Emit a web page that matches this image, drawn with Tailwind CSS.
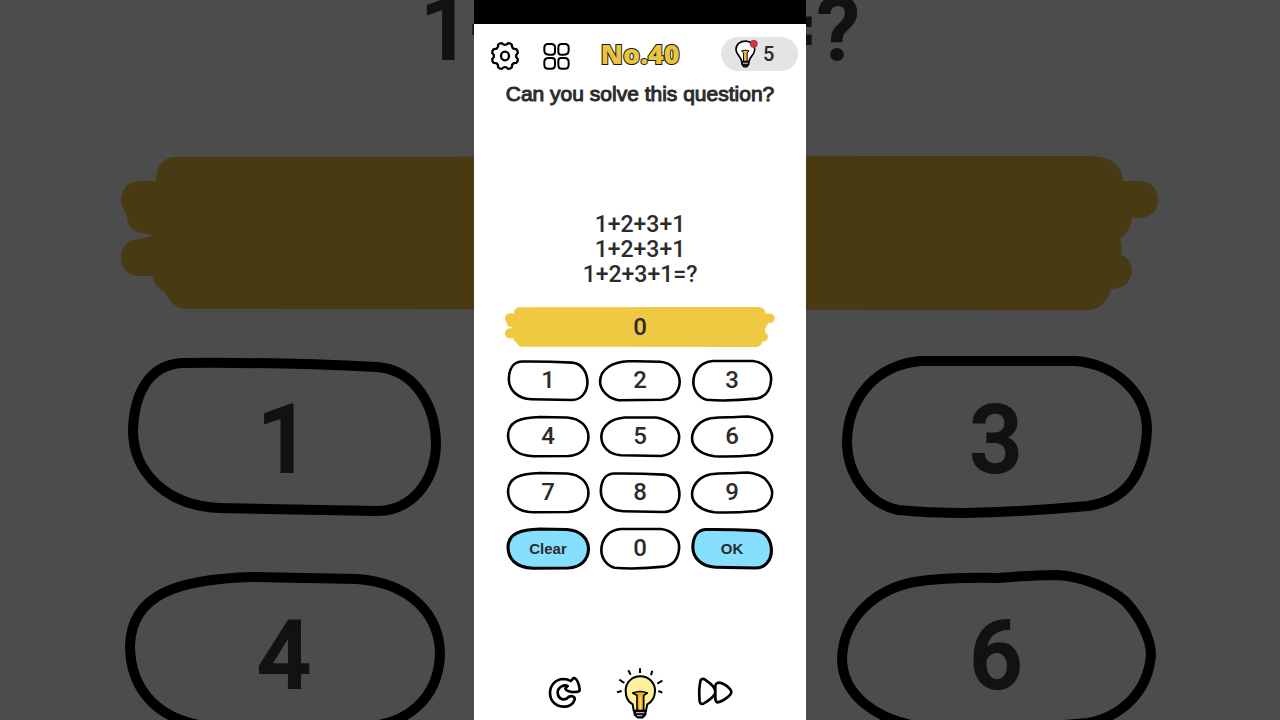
<!doctype html>
<html lang="en">
    <head>
        <meta charset="utf-8" />
        <meta name="viewport" content="width=device-width, initial-scale=1" />
        <script src="https://cdn.jsdelivr.net/npm/@tailwindcss/browser@4"></script>
        <title>No.40</title>
    </head>

    <body
        class="relative min-h-screen overflow-x-hidden bg-[#4c4c4c] font-['Roboto',Arial,sans-serif] font-medium text-[#2b2b2b]"
    >
        <!-- shared hand-drawn shapes -->
        <svg class="hidden" aria-hidden="true">
            <symbol id="key-a" viewBox="0 0 316 158" overflow="visible">
                <path d="M56 6Q150 5 251 10C290 13 310 50 310 88C309 125 285 154 251 154L94 151C40 149 7 115 7 73C8 38 22 8 56 6Z" />
            </symbol>
            <symbol id="key-b" viewBox="0 0 316 158" overflow="visible">
                <path d="M113 5Q175 4 235 7C280 10 311 45 311 85C310 125 282 151 242 153L75 155C35 150 4 115 4 82C6 35 50 8 113 5Z" />
            </symbol>
            <symbol id="key-c" viewBox="0 0 316 158" overflow="visible">
                <path d="M83 4L238 4C280 8 309 38 309 73C307 115 290 143 250 149Q185 155 126 156Q90 156 60 153C28 146 9 115 9 85C10 40 38 8 83 4Z" />
            </symbol>
            <symbol id="key-d" viewBox="0 0 316 158" overflow="visible">
                <path d="M127 4L231 6C285 10 314 42 314 82C312 125 282 152 236 154L100 155C30 153 4 115 4 72C6 22 50 6 127 4Z" />
            </symbol>
            <symbol id="key-e" viewBox="0 0 316 158" overflow="visible">
                <path d="M100 6L220 6C270 14 309 45 309 80C308 120 285 148 240 154L85 151C35 148 9 115 9 80C10 38 45 10 100 6Z" />
            </symbol>
            <symbol id="key-f" viewBox="0 0 316 158" overflow="visible">
                <path d="M76 9Q110 4 160 5Q195 2 218 2C245 3 274 16 288 29C300 42 313 64 313 82C310 118 285 143 250 150Q160 158 90 155C35 148 4 120 4 85C6 42 40 16 76 9Z" />
            </symbol>
            <symbol id="brush" viewBox="0 0 1038 154" preserveAspectRatio="none">
                <path d="M52 1L780 0L968 0C990 0 1002 10 1002 25L1020 25C1043 27 1043 60 1020 62L1011 62Q1010 75 999 83Q1001 90 1000 98C1018 108 1013 133 990 133Q984 154 966 154L63 153Q49 150 45 137Q34 132 31 120L16 120C-5 117 -6 87 16 83Q27 82 31 79L20 77Q6 74 6 60Q0 50 0 42Q3 26 17 25L35 25Q35 4 52 1Z" />
            </symbol>
        </svg>

        <!-- dimmed backdrop behind the phone -->
        <div
            class="absolute inset-0 flex flex-col items-center overflow-hidden text-[#121212]"
            aria-hidden="true"
        >
            <div class="-mt-[19px] h-24 shrink-0 text-[88px] leading-[96px] [-webkit-text-stroke:2px]">1+2+3+1=?</div>
            <svg class="mt-[79px] h-[154px] w-[1038px] shrink-0 fill-[#483b14]"><use href="#brush" /></svg>
            <div
                class="mt-[47px] grid shrink-0 grid-cols-[316px_316px] gap-x-[396px] gap-y-[58px] text-[94px] leading-[150px] [-webkit-text-stroke:2px] *:grid *:place-items-center *:*:col-start-1 *:*:row-start-1"
            >
                <div><svg class="h-[158px] w-[316px] overflow-visible fill-none stroke-black stroke-10"><use href="#key-a" /></svg><span class="pt-2">1</span></div>
                <div><svg class="h-[158px] w-[316px] overflow-visible fill-none stroke-black stroke-10"><use href="#key-c" /></svg><span class="pt-2">3</span></div>
                <div><svg class="h-[158px] w-[316px] overflow-visible fill-none stroke-black stroke-10"><use href="#key-d" /></svg><span class="pt-2">4</span></div>
                <div><svg class="h-[158px] w-[316px] overflow-visible fill-none stroke-black stroke-10"><use href="#key-f" /></svg><span class="pt-2">6</span></div>
            </div>
        </div>

        <main class="relative mx-auto flex min-h-screen w-full max-w-[332px] flex-col bg-white">
            <div class="h-6 bg-black"></div>

            <header class="mt-[13px] grid grid-cols-[1fr_auto_1fr] items-center px-2">
                <div class="flex items-center gap-[22px] pt-[3px] pl-2">
                    <button aria-label="Settings">
                        <svg class="size-[30px] fill-none stroke-black stroke-7" viewBox="-45 -45 90 90" stroke-linejoin="round">
                            <path
                                d="M38.4 9.2Q38.8 16.1 33.7 20.6Q19.8 19.8 20.6 33.7Q16.1 38.8 9.2 38.4Q0 28 -9.2 38.4Q-16.1 38.8 -20.6 33.7Q-19.8 19.8 -33.7 20.6Q-38.8 16.1 -38.4 9.2Q-28 0 -38.4 -9.2Q-38.8 -16.1 -33.7 -20.6Q-19.8 -19.8 -20.6 -33.7Q-16.1 -38.8 -9.2 -38.4Q0 -28 9.2 -38.4Q16.1 -38.8 20.6 -33.7Q19.8 -19.8 33.7 -20.6Q38.8 -16.1 38.4 -9.2Q28 0 38.4 9.2Z"
                            />
                            <ellipse rx="12" ry="13" />
                        </svg>
                    </button>
                    <button aria-label="Levels">
                        <svg class="size-7 fill-none stroke-black stroke-6" viewBox="186 33 84 84">
                            <path d="M204 39H214Q225 39 225 50V62Q225 71 216 71H206Q193 71 193 58V51Q193 39 204 39Z" />
                            <path d="M245 39H255Q266 39 266 50V58Q266 71 253 71H243Q235 71 235 62V50Q235 39 245 39Z" />
                            <path d="M206 81H216Q225 81 225 90V101Q225 113 214 113H204Q193 113 193 101V93Q193 81 206 81Z" />
                            <path d="M243 81H253Q266 81 266 93V101Q266 113 255 113H245Q235 113 235 101V90Q235 81 243 81Z" />
                        </svg>
                    </button>
                </div>
                <h1
                    class="font-['Open_Sans','Liberation_Sans',sans-serif] text-[27px] leading-[34px] font-extrabold text-[#e9c43c] [-webkit-text-stroke:2px_#1a1a1a] [paint-order:stroke_fill]"
                >No.40</h1>
                <button
                    class="flex h-[34px] w-[77px] items-center gap-1 justify-self-end rounded-full bg-[#e4e4e4] pl-[13px] text-xl"
                    aria-label="5 hints"
                >
                    <svg class="h-[30px] w-[25px] shrink-0" viewBox="432 30 76 90" fill="none" stroke="#000" stroke-width="5" stroke-linejoin="round">
                        <path d="M455 98C455 83 438 79 438 61C438 45 451 36 467 36C484 36 495 47 495 62C494 80 478 83 478 98Z" fill="#fff" />
                        <path d="M455 66Q467 60 478 66L472 71V97H461V71Z" fill="#e9b93a" stroke-width="3" />
                        <path d="M455 99H478L477 107L471 114H462L456 107Z" fill="#111" stroke-width="4" />
                        <path d="M459 103H474" stroke="#ddd" stroke-width="3" />
                        <circle cx="492" cy="44" r="11" fill="#d8353a" stroke="#7c2325" stroke-width="2" />
                    </svg>
                    <span>5</span>
                </button>
            </header>

            <h2 class="mt-[9px] text-center font-['Liberation_Sans',Arial,sans-serif] text-[21px] leading-7 font-normal [-webkit-text-stroke:1px]">Can you solve this question?</h2>

            <p class="mt-[104px] text-center text-[23px] leading-[25px]">
                1+2+3+1<br />1+2+3+1<br />1+2+3+1=?
            </p>

            <div class="mx-auto mt-5 grid h-10 w-[270px] place-items-center *:col-start-1 *:row-start-1">
                <svg class="h-10 w-[270px] fill-[#efc942]" aria-hidden="true"><use href="#brush" /></svg>
                <output id="answer" class="text-2xl" aria-label="Answer">0</output>
            </div>

            <div
                id="keypad"
                class="mx-auto mt-[13px] grid grid-cols-[82px_82px_82px] gap-x-[10px] gap-y-[15px] text-2xl leading-[41px] *:grid *:h-[41px] *:place-items-center *:*:col-start-1 *:*:row-start-1"
            >
                <button><svg class="h-[41px] w-[82px] overflow-visible fill-white stroke-black stroke-10"><use href="#key-a" /></svg><span>1</span></button>
                <button><svg class="h-[41px] w-[82px] overflow-visible fill-white stroke-black stroke-10"><use href="#key-b" /></svg><span>2</span></button>
                <button><svg class="h-[41px] w-[82px] overflow-visible fill-white stroke-black stroke-10"><use href="#key-c" /></svg><span>3</span></button>
                <button><svg class="h-[41px] w-[82px] overflow-visible fill-white stroke-black stroke-10"><use href="#key-d" /></svg><span>4</span></button>
                <button><svg class="h-[41px] w-[82px] overflow-visible fill-white stroke-black stroke-10"><use href="#key-e" /></svg><span>5</span></button>
                <button><svg class="h-[41px] w-[82px] overflow-visible fill-white stroke-black stroke-10"><use href="#key-f" /></svg><span>6</span></button>
                <button><svg class="h-[41px] w-[82px] overflow-visible fill-white stroke-black stroke-10"><use href="#key-d" /></svg><span>7</span></button>
                <button><svg class="h-[41px] w-[82px] overflow-visible fill-white stroke-black stroke-10"><use href="#key-a" /></svg><span>8</span></button>
                <button><svg class="h-[41px] w-[82px] overflow-visible fill-white stroke-black stroke-10"><use href="#key-f" /></svg><span>9</span></button>
                <button><svg class="h-[41px] w-[82px] overflow-visible fill-[#87dfff] stroke-black stroke-12"><use href="#key-d" /></svg><span class="font-['Liberation_Sans',Arial,sans-serif] text-[15px] font-bold">Clear</span></button>
                <button><svg class="h-[41px] w-[82px] overflow-visible fill-white stroke-black stroke-10"><use href="#key-c" /></svg><span>0</span></button>
                <button><svg class="h-[41px] w-[82px] overflow-visible fill-[#87dfff] stroke-black stroke-12"><use href="#key-a" /></svg><span class="font-['Liberation_Sans',Arial,sans-serif] text-[15px] font-bold">OK</span></button>
            </div>

            <footer class="mt-auto flex items-center justify-center gap-8">
                <button class="pb-1" aria-label="Restart">
                    <svg class="size-9 fill-white stroke-black stroke-8" viewBox="51 57 108 108" stroke-linejoin="round">
                        <path
                            d="M122 78L131 69C140 68 149 90 149 106C148 110 140 111 132 111C122 112 108 108 106 101C106 97 112 96 113 93C103 88 82 96 83 114C85 135 105 138 116 126C124 121 136 124 134 134C130 148 115 156 100 155C75 154 60 136 60 113C61 88 78 73 100 72C108 72 116 74 122 78Z"
                        />
                    </svg>
                </button>
                <button aria-label="Hint">
                    <svg class="h-[52px] w-[50px]" viewBox="255 39 150 156" fill="none" stroke="#000" stroke-width="6" stroke-linejoin="round">
                        <path d="M311 167L308 148C294 140 287 124 287 107C287 82 306 64 331 64C356 64 375 83 375 107C375 125 366 140 352 148L348 167Z" fill="#fff09b" />
                        <path d="M308 114Q330 105 352 114L341 121V166H321V121Z" fill="#f3b31f" stroke-width="5" />
                        <path d="M331 124V164" stroke="#ffdb63" stroke-width="4" />
                        <path d="M312 168H348L346 180L338 188H323L314 180Z" fill="#111" stroke-width="5" />
                        <path d="M318 173H343M321 182H337" stroke="#d5d5d5" stroke-width="3" />
                        <path d="M330 40V54M295 46L302 59M367 47L363 61M268 74L283 84M397 77L382 86M261 112L275 108M397 113L385 108" stroke-width="6" />
                    </svg>
                </button>
                <button class="pb-1" aria-label="Skip">
                    <svg class="size-9 fill-white stroke-black stroke-8" viewBox="501 57 108 108" stroke-linejoin="round">
                        <path d="M512 75C516 70 522 71 528 76C540 84 556 98 556 110C556 122 535 138 520 146C512 149 510 145 509 138C507 118 507 95 512 75Z" />
                        <path d="M562 84C575 78 604 100 604 112C604 122 575 141 563 142C556 141 556 133 556 128V92C557 88 558 85 562 84Z" />
                    </svg>
                </button>
            </footer>
        </main>

        <script>
            const answer = document.getElementById("answer");

            document.getElementById("keypad").addEventListener("click", (e) => {
                const key = e.target.closest("button");
                if (!key) {
                    return;
                }

                const label = key.textContent.trim();
                if (label === "Clear") {
                    answer.textContent = "0";
                } else if (label !== "OK" && answer.textContent.length < 8) {
                    answer.textContent = String(Number(answer.textContent + label));
                }
            });
        </script>
    </body>
</html>
